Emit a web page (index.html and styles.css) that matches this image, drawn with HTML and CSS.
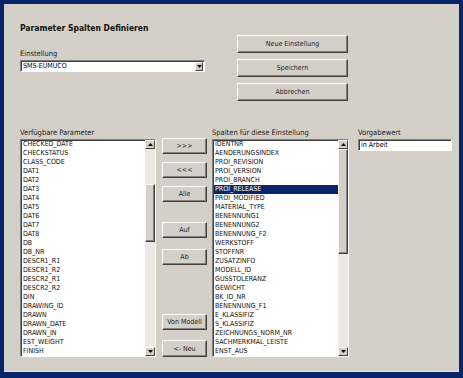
FILE: index.html
```html
<!DOCTYPE html>
<html lang="de">
<head>
    <meta charset="UTF-8">
    <title>Parameter Spalten Definieren</title>
    <link rel="stylesheet" href="styles.css">
</head>
<body>
    <div class="window">
        <div class="top">
            <div class="top-left">
                <h1 class="title">Parameter Spalten Definieren</h1>
                <div class="label label-einst">Einstellung</div>
                <div class="combo">
                    <span class="combo-text">SMS-EUMUCO</span>
                    <span class="arrow-btn"><svg width="5" height="3" viewBox="0 0 5 3"><polygon points="0,0 5,0 2.5,3" fill="#000"/></svg></span>
                </div>
            </div>
            <div class="top-buttons">
                <button class="btn btn-big">Neue Einstellung</button>
                <button class="btn btn-big">Speichern</button>
                <button class="btn btn-big">Abbrechen</button>
            </div>
        </div>

        <div class="bottom">
            <!-- Verfuegbare Parameter -->
            <div class="col">
                <div class="label">Verfügbare Parameter</div>
                <div class="listbox">
                    <ul class="items">
                        <li>CHECKED_DATE</li>
                        <li>CHECKSTATUS</li>
                        <li>CLASS_CODE</li>
                        <li>DAT1</li>
                        <li>DAT2</li>
                        <li>DAT3</li>
                        <li>DAT4</li>
                        <li>DAT5</li>
                        <li>DAT6</li>
                        <li>DAT7</li>
                        <li>DAT8</li>
                        <li>DB</li>
                        <li>DB_NR</li>
                        <li>DESCR1_R1</li>
                        <li>DESCR1_R2</li>
                        <li>DESCR2_R1</li>
                        <li>DESCR2_R2</li>
                        <li>DIN</li>
                        <li>DRAWING_ID</li>
                        <li>DRAWN</li>
                        <li>DRAWN_DATE</li>
                        <li>DRAWN_IN</li>
                        <li>EST_WEIGHT</li>
                        <li>FINISH</li>
                    </ul>
                    <div class="scrollbar">
                        <span class="arrow-btn"><svg width="5" height="3" viewBox="0 0 5 3"><polygon points="0,3 5,3 2.5,0" fill="#000"/></svg></span>
                        <div class="track"><div class="thumb thumb-left"></div></div>
                        <span class="arrow-btn"><svg width="5" height="3" viewBox="0 0 5 3"><polygon points="0,0 5,0 2.5,3" fill="#000"/></svg></span>
                    </div>
                </div>
            </div>

            <!-- Buttons Mitte -->
            <div class="mid-buttons">
                <button class="btn btn-small b-add">&gt;&gt;&gt;</button>
                <button class="btn btn-small b-rem">&lt;&lt;&lt;</button>
                <button class="btn btn-small b-all">Alle</button>
                <button class="btn btn-small b-up">Auf</button>
                <button class="btn btn-small b-down">Ab</button>
                <button class="btn btn-small b-model">Von Modell</button>
                <button class="btn btn-small b-new">&lt;- Neu</button>
            </div>

            <!-- Spalten -->
            <div class="col">
                <div class="label">Spalten für diese Einstellung</div>
                <div class="listbox">
                    <ul class="items">
                        <li>IDENTNR</li>
                        <li>AENDERUNGSINDEX</li>
                        <li>PROI_REVISION</li>
                        <li>PROI_VERSION</li>
                        <li>PROI_BRANCH</li>
                        <li class="selected">PROI_RELEASE</li>
                        <li>PROI_MODIFIED</li>
                        <li>MATERIAL_TYPE</li>
                        <li>BENENNUNG1</li>
                        <li>BENENNUNG2</li>
                        <li>BENENNUNG_F2</li>
                        <li>WERKSTOFF</li>
                        <li>STOFFNR</li>
                        <li>ZUSATZINFO</li>
                        <li>MODELL_ID</li>
                        <li>GUSSTOLERANZ</li>
                        <li>GEWICHT</li>
                        <li>BK_ID_NR</li>
                        <li>BENENNUNG_F1</li>
                        <li>E_KLASSIFIZ</li>
                        <li>S_KLASSIFIZ</li>
                        <li>ZEICHNUNGS_NORM_NR</li>
                        <li>SACHMERKMAL_LEISTE</li>
                        <li>ENST_AUS</li>
                    </ul>
                    <div class="scrollbar">
                        <span class="arrow-btn"><svg width="5" height="3" viewBox="0 0 5 3"><polygon points="0,3 5,3 2.5,0" fill="#000"/></svg></span>
                        <div class="track"><div class="thumb thumb-right"></div></div>
                        <span class="arrow-btn"><svg width="5" height="3" viewBox="0 0 5 3"><polygon points="0,0 5,0 2.5,3" fill="#000"/></svg></span>
                    </div>
                </div>
            </div>

            <!-- Vorgabewert -->
            <div class="col col-value">
                <div class="label">Vorgabewert</div>
                <div class="textbox">in Arbeit</div>
            </div>
        </div>
    </div>
</body>
</html>
```

FILE: styles.css
```css
* {
    box-sizing: border-box;
}

body {
    margin: 0;
    background: #0a246a;
    font-family: 'Liberation Sans Narrow', 'DejaVu Sans Condensed', 'Liberation Sans', sans-serif;
    font-size: 7.5px;
    color: #000;
    height: 378px;
    overflow: hidden;
}

.window {
    margin: 4px 4px 0 4px;
    height: 368px;
    background: #d4d0c8;
    padding-left: 16px;
    border-bottom: 1px solid #e4e2dc;
}

.top {
    display: flex;
    height: 124px;
}

.top-left {
    width: 185px;
}

.title {
    margin: 19px 0 0 0;
    font-size: 8.5px;
    line-height: 10px;
    font-weight: bold;
    color: #111;
}

.label {
    line-height: 9px;
    height: 9px;
    color: #222;
}

.label-einst {
    margin-top: 16px;
}

.combo {
    margin-top: 2px;
    height: 12px;
    background: #fff;
    border: 1px solid;
    border-color: #808080 #fff #fff #808080;
    box-shadow: inset 1px 1px 0 #404040;
    display: flex;
    align-items: center;
    padding: 0 1px 0 2px;
    font-size: 7px;
}

.combo-text {
    flex: 1;
    line-height: 9px;
}

.arrow-btn {
    width: 9px;
    height: 9px;
    background: #d4d0c8;
    border: 1px solid;
    border-color: #fff #404040 #404040 #fff;
    display: flex;
    align-items: center;
    justify-content: center;
}

.combo .arrow-btn {
    height: 9px;
    width: 8px;
}

.top-buttons {
    margin-left: 32px;
    margin-top: 31px;
    width: 111px;
    display: flex;
    flex-direction: column;
    gap: 6px;
}

.btn {
    font-family: inherit;
    font-size: 7px;
    background: #d4d0c8;
    border: 1px solid;
    border-color: #fff #404040 #404040 #fff;
    box-shadow: inset -1px -1px 0 #808080;
    padding: 0;
    color: #222;
    margin: 0;
}

.btn-big {
    height: 18px;
}

.bottom {
    display: grid;
    grid-template-columns: 136px 45px 136px 97px;
    column-gap: 6px;
    align-items: start;
}

.bottom > .col:nth-child(3) {
    margin-left: -1px;
}

.col-value {
    margin-left: 3px;
}

.listbox {
    margin-top: 2px;
    height: 218px;
    background: #fff;
    border: 1px solid;
    border-color: #808080 #fff #fff #808080;
    box-shadow: inset 1px 1px 0 #404040;
    display: flex;
    padding: 0 0 0 1px;
}

.items {
    list-style: none;
    margin: 0;
    padding: 0;
    flex: 1;
    overflow: hidden;
    font-size: 7px;
}

.items li {
    height: 9px;
    line-height: 9px;
    padding-left: 1px;
    white-space: nowrap;
    color: #111;
}

.items li.selected {
    background: #0a246a;
    color: #fff;
}

.scrollbar {
    width: 10px;
    display: flex;
    flex-direction: column;
}

.scrollbar .arrow-btn {
    width: 10px;
    height: 9px;
}

.track {
    flex: 1;
    background: #ebe9e5;
}

.thumb {
    background: #d4d0c8;
    border: 1px solid;
    border-color: #fff #404040 #404040 #fff;
    box-shadow: inset -1px -1px 0 #808080;
}

.thumb-left {
    margin-top: 35px;
    height: 58px;
}

.thumb-right {
    height: 105px;
}

.mid-buttons {
    padding-top: 10px;
    display: flex;
    flex-direction: column;
}

.btn-small {
    height: 16px;
    width: 45px;
}

.b-rem, .b-all {
    margin-top: 8px;
}

.b-up {
    margin-top: 20px;
}

.b-down {
    margin-top: 11px;
}

.b-model {
    margin-top: 49px;
}

.b-new {
    margin-top: 10px;
    height: 17px;
}

.textbox {
    margin-top: 2px;
    height: 12px;
    background: #fff;
    border: 1px solid;
    border-color: #808080 #fff #fff #808080;
    box-shadow: inset 1px 1px 0 #404040;
    line-height: 10px;
    padding-left: 2px;
    font-size: 7px;
}
```
